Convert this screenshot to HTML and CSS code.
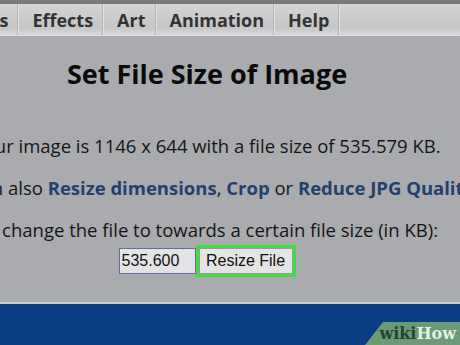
FILE: index.html
```html
<!DOCTYPE html>
<html lang="en">
<head>
    <meta charset="UTF-8">
    <title>Set File Size of Image</title>
    <link rel="stylesheet" href="styles.css">
</head>
<body>

<div id="topstrip"></div>
<div id="menubar">
    <div class="menu-item">Filters</div>
    <div class="menu-item">Effects</div>
    <div class="menu-item">Art</div>
    <div class="menu-item">Animation</div>
    <div class="menu-item">Help</div>
</div>

<div id="page">
    <div id="content">
        <h1 id="title">Set File Size of Image</h1>
        <p class="line">Your image is 1146 x 644 with a file size of 535.579 KB.</p>
        <p class="line">You can also <a href="#">Resize dimensions</a>, <a href="#">Crop</a> or <a href="#">Reduce JPG Quality</a>.</p>
        <p class="line">To change the file to towards a certain file size (in KB):</p>
        <div id="form">
            <input type="text" id="size" value="535.600">
            <button id="resize">Resize File</button>
        </div>
    </div>
</div>

<div id="footer">
    <div id="badge"><span class="wiki">wiki</span><span class="how">How</span></div>
</div>

</body>
</html>
```

FILE: styles.css
```css
body {
    margin: 0;
    padding: 0;
    width: 460px;
    height: 345px;
    overflow: hidden;
    background-color: #a9abae;
    font-family: "Open Sans", sans-serif;
    color: #111;
}

#topstrip {
    height: 4px;
    background-color: #7a7a7a;
}

#menubar {
    display: flex;
    height: 31px;
    margin-left: -62px;
    background: linear-gradient(#d4d4d4, #c6c6c6 75%, #d8d8d8);
    border-bottom: 1px solid #e0e0e0;
}

.menu-item {
    padding: 2px 9px 0 14px;
    line-height: 29px;
    font-size: 18px;
    font-weight: bold;
    color: #333;
    border-right: 1px solid #b5b5b5;
    box-shadow: 1px 0 0 #e2e2e2;
}

#page {
    height: 266px;
    border-bottom: 2px solid #c9cdd4;
}

#content {
    width: 600px;
    margin-left: -93px;
    text-align: center;
}

#title {
    margin: 0;
    padding-top: 22px;
    font-size: 27px;
    line-height: 32px;
    font-weight: bold;
    color: #0a0a0a;
}

.line {
    margin: 0;
    font-size: 18.5px;
    line-height: 42px;
    color: #151515;
}

.line:first-of-type {
    margin-top: 35px;
}

.line a {
    color: #24406e;
    font-weight: bold;
    text-decoration: none;
}

#form {
    display: flex;
    justify-content: center;
    align-items: center;
    margin-top: -6px;
}

#size {
    width: 71px;
    height: 24px;
    padding: 0 2px;
    margin: 0;
    border: 1px solid #5f6f9c;
    background-color: #e3e3e6;
    font-family: "Liberation Sans", Arial, sans-serif;
    font-size: 16px;
    color: #111;
}

#resize {
    width: 100px;
    height: 32px;
    margin: 0;
    padding: 0;
    white-space: nowrap;
    border: 3px solid #3ee040;
    background-color: #e4e4e4;
    box-shadow: inset 0 0 0 1px #9a9a9a;
    font-family: "Liberation Sans", Arial, sans-serif;
    font-size: 16px;
    color: #111;
}

#footer {
    position: relative;
    height: 41px;
    background-color: #0b3e80;
}

#badge {
    position: absolute;
    right: 0;
    bottom: 0;
    width: 95px;
    height: 23px;
    background-color: #6c9a77;
    clip-path: polygon(18px 0, 100% 0, 100% 100%, 0 100%);
    text-align: right;
    padding-right: 4px;
    box-sizing: border-box;
    font-family: "DejaVu Serif", serif;
    font-weight: bold;
    font-size: 16px;
    line-height: 23px;
}

.wiki {
    color: #27432f;
}

.how {
    color: #e6efe8;
}
```
